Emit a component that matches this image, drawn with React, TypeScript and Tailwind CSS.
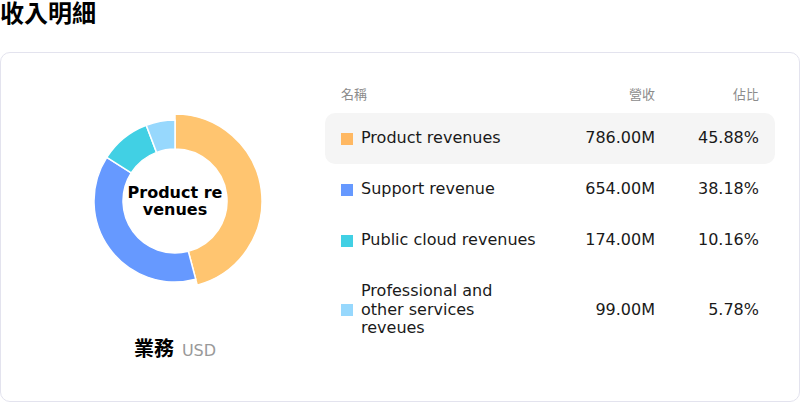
import React from 'react';

interface RevenueItem {
  name: string;
  value: string;
  percent: number;
  color: string;
  pieColor: string;
}

const items: RevenueItem[] = [
  { name: 'Product revenues', value: '786.00M', percent: 45.88, color: '#ffb862', pieColor: '#ffc570' },
  { name: 'Support revenue', value: '654.00M', percent: 38.18, color: '#6699ff', pieColor: '#6699ff' },
  { name: 'Public cloud revenues', value: '174.00M', percent: 10.16, color: '#41d0e4', pieColor: '#41d0e4' },
  { name: 'Professional and other services reveues', value: '99.00M', percent: 5.78, color: '#97d8fd', pieColor: '#97d8fd' },
];

const CX = 100;
const CY = 100;
const INNER = 52;
const OUTER = 81;
const ACTIVE_OUTER = 87;

// sector path, angles in degrees clockwise from 12 o'clock
function sectorPath(start: number, end: number, r0: number, r1: number) {
  const pt = (deg: number, r: number) => {
    const a = ((deg - 90) * Math.PI) / 180;
    return `${(CX + r * Math.cos(a)).toFixed(2)} ${(CY + r * Math.sin(a)).toFixed(2)}`;
  };
  const large = end - start > 180 ? 1 : 0;
  return [
    `M ${pt(start, r1)}`,
    `A ${r1} ${r1} 0 ${large} 1 ${pt(end, r1)}`,
    `L ${pt(end, r0)}`,
    `A ${r0} ${r0} 0 ${large} 0 ${pt(start, r0)}`,
    'Z',
  ].join(' ');
}

const Donut: React.FC = () => {
  const total = items.reduce((s, i) => s + i.percent, 0);
  let acc = 0;
  return (
    <div className="relative w-[200px] h-[200px]">
      <svg width="200" height="200" viewBox="0 0 200 200">
        {items.map((item, idx) => {
          const start = (acc / total) * 360;
          acc += item.percent;
          const end = (acc / total) * 360;
          return (
            <path
              key={item.name}
              d={sectorPath(start, end, INNER, idx === 0 ? ACTIVE_OUTER : OUTER)}
              fill={item.pieColor}
              stroke="#ffffff"
              strokeWidth={1.5}
              strokeLinejoin="round"
            />
          );
        })}
      </svg>
      <div className="absolute inset-0 flex items-center justify-center">
        <div className="w-[98px] text-center font-bold text-[16px] leading-[17px] text-black break-all">
          Product revenues
        </div>
      </div>
    </div>
  );
};

export default function App() {
  return (
    <div
      className="w-[800px] h-[402px] bg-white text-[#1a1a1a]"
      style={{ fontFamily: '"DejaVu Sans", "Noto Sans CJK TC", sans-serif' }}
    >
      <h1 className="h-[28px] mb-6 text-[24px] leading-[28px] font-bold text-black">收入明細</h1>

      <div className="h-[350px] border border-[#e3e3ee] rounded-[10px] px-6 pt-6 flex">
        <div className="w-[300px] flex flex-col items-center">
          <div className="mt-6">
            <Donut />
          </div>
          <div className="mt-9 flex items-baseline gap-2 leading-[24px]">
            <span className="text-[20px] font-bold text-black">業務</span>
            <span className="text-[16px] text-[#999999]">USD</span>
          </div>
        </div>

        <div className="flex-1">
          <div className="grid grid-cols-[1fr_110px_104px] h-9 items-center px-4 text-[13px] text-[#8c8c8c]">
            <span>名稱</span>
            <span className="text-right">營收</span>
            <span className="text-right">佔比</span>
          </div>
          {items.map((item, idx) => (
            <div
              key={item.name}
              className={`grid grid-cols-[1fr_110px_104px] items-center px-4 text-[16px] leading-[18.5px] rounded-[10px] ${
                idx === 0 ? 'bg-[#f5f5f5]' : ''
              } ${idx === 3 ? 'py-4' : 'h-[51px]'}`}
            >
              <div className="flex items-center gap-2">
                <span className="w-3 h-3 shrink-0" style={{ backgroundColor: item.color }} />
                <span className="pr-2">{item.name}</span>
              </div>
              <span className="text-right">{item.value}</span>
              <span className="text-right">{item.percent.toFixed(2)}%</span>
            </div>
          ))}
        </div>
      </div>
    </div>
  );
}
